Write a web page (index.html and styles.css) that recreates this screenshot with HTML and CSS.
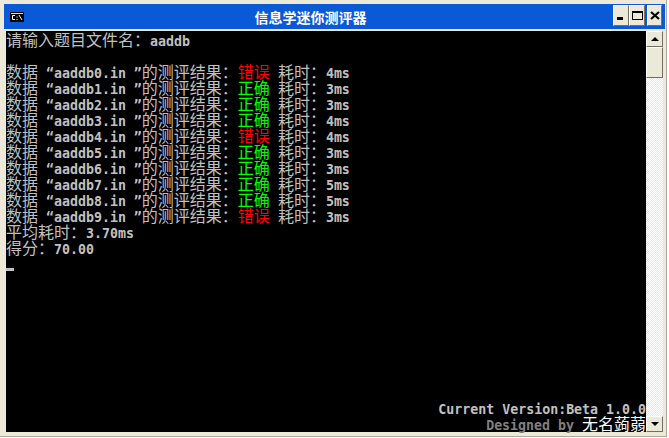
FILE: index.html
```html
<!DOCTYPE html>
<html lang="zh-CN">
<head>
<meta charset="utf-8">
<title>信息学迷你测评器</title>
<link rel="stylesheet" href="styles.css">
</head>
<body>
<div class="window">
  <header class="titlebar">
    <svg class="appicon" width="14" height="10" viewBox="0 0 14 10"><rect width="14" height="10" fill="#000"/><rect x="1" y="1" width="12" height="1" fill="#d8d8d8"/><path d="M5 3.5H2.5V7.5H5M7 4.5V5.5M7 7V8M9 3L12 8" fill="none" stroke="#fff"/></svg>
    <div class="title">信息学迷你测评器</div>
    <div class="btns">
      <div class="btn"><span class="min"></span></div>
      <div class="btn"><span class="max"></span></div>
      <div class="btn close"><svg width="10" height="9" viewBox="0 0 10 9"><path d="M1 1L9 8M9 1L1 8" stroke="#000" stroke-width="2.2" fill="none"/></svg></div>
    </div>
  </header>
  <div class="client">
    <main class="term">
      <div class="line"><span class="c">请输入题目文件名：</span><span class="l">aaddb</span></div>
      <div class="line"></div>
      <div class="line"><span class="c">数据</span><span class="l"> “aaddb0.in ”</span><span class="c">的测评结果：</span><span class="c err">错误</span><span class="l"> </span><span class="c">耗时：</span><span class="l">4ms</span></div>
      <div class="line"><span class="c">数据</span><span class="l"> “aaddb1.in ”</span><span class="c">的测评结果：</span><span class="c ok">正确</span><span class="l"> </span><span class="c">耗时：</span><span class="l">3ms</span></div>
      <div class="line"><span class="c">数据</span><span class="l"> “aaddb2.in ”</span><span class="c">的测评结果：</span><span class="c ok">正确</span><span class="l"> </span><span class="c">耗时：</span><span class="l">3ms</span></div>
      <div class="line"><span class="c">数据</span><span class="l"> “aaddb3.in ”</span><span class="c">的测评结果：</span><span class="c ok">正确</span><span class="l"> </span><span class="c">耗时：</span><span class="l">4ms</span></div>
      <div class="line"><span class="c">数据</span><span class="l"> “aaddb4.in ”</span><span class="c">的测评结果：</span><span class="c err">错误</span><span class="l"> </span><span class="c">耗时：</span><span class="l">4ms</span></div>
      <div class="line"><span class="c">数据</span><span class="l"> “aaddb5.in ”</span><span class="c">的测评结果：</span><span class="c ok">正确</span><span class="l"> </span><span class="c">耗时：</span><span class="l">3ms</span></div>
      <div class="line"><span class="c">数据</span><span class="l"> “aaddb6.in ”</span><span class="c">的测评结果：</span><span class="c ok">正确</span><span class="l"> </span><span class="c">耗时：</span><span class="l">3ms</span></div>
      <div class="line"><span class="c">数据</span><span class="l"> “aaddb7.in ”</span><span class="c">的测评结果：</span><span class="c ok">正确</span><span class="l"> </span><span class="c">耗时：</span><span class="l">5ms</span></div>
      <div class="line"><span class="c">数据</span><span class="l"> “aaddb8.in ”</span><span class="c">的测评结果：</span><span class="c ok">正确</span><span class="l"> </span><span class="c">耗时：</span><span class="l">5ms</span></div>
      <div class="line"><span class="c">数据</span><span class="l"> “aaddb9.in ”</span><span class="c">的测评结果：</span><span class="c err">错误</span><span class="l"> </span><span class="c">耗时：</span><span class="l">3ms</span></div>
      <div class="line"><span class="c">平均耗时：</span><span class="l">3.70ms</span></div>
      <div class="line"><span class="c">得分：</span><span class="l">70.00</span></div>
      <div class="line cursorline"><span class="cursor"></span></div>
      <footer class="foot">
        <div class="line right"><span class="l">Current Version:Beta 1.0.0</span></div>
        <div class="line right"><span class="l dim">Designed by </span><span class="c white">无名蒟蒻</span></div>
      </footer>
    </main>
    <aside class="scroll">
      <div class="arrow"><span class="up"></span></div>
      <div class="thumb"></div>
      <div class="track"></div>
      <div class="arrow"><span class="down"></span></div>
    </aside>
  </div>
</div>
</body>
</html>
```
FILE: styles.css
```css
html, body { margin: 0; padding: 0; background: #fff; }
body { width: 669px; height: 438px; overflow: hidden; }
.window {
  box-sizing: border-box; width: 667px; height: 437px;
  display: flex; flex-direction: column;
  background: #ece9d8; padding: 4px 1px 4px 4px;
  border-right: 1px solid #aca899; border-bottom: 1px solid #aca899;
}
.titlebar {
  height: 25px; margin-bottom: 2px; flex: none; display: flex; align-items: center;
  background: #0a5ad8; padding: 0 3px 0 6px; box-sizing: border-box;
}
.appicon { flex: none; }
.title {
  flex: 1; text-align: center; color: #fff;
  font: 700 14px/16px "Noto Sans CJK SC", sans-serif; padding-right: 16px;
}
.btns { display: flex; margin-bottom: 2px; }
.btn {
  width: 16px; height: 21px; box-sizing: border-box;
  background: #ece9d8; border: 1px solid; border-color: #fff #716f64 #716f64 #fff;
  display: flex; align-items: center; justify-content: center;
}
.close { margin-left: 2px; width: 15px; }
.min { width: 6px; height: 3px; background: #000; align-self: flex-end; margin: 0 2px 5px 0; }
.max { width: 11px; height: 9px; box-sizing: border-box; border: 1px solid #000; border-top-width: 2px; }
.client { flex: 1; min-height: 0; display: flex; padding: 0 2px; }
.term {
  flex: 1; min-width: 0; display: flex; flex-direction: column; background: #000; color: #c0c0c0;
  padding-bottom: 1px; opacity: .999;
}
.line { height: 16px; font: 400 16px/16px "Noto Sans CJK SC", sans-serif; white-space: pre; flex: none; }
.c { font: 400 16px/16px "Noto Sans CJK SC", sans-serif; }
.l { font: 700 13.28px/16px "DejaVu Sans Mono", monospace; white-space: pre; }
.err { color: #ff0000; }
.ok { color: #00ff00; }
.white { color: #fff; }
.dim { color: #808080; }
.cursorline { display: flex; align-items: flex-end; }
.cursor { width: 8px; height: 3px; background: #c0c0c0; }
.foot { margin-top: auto; }
.right { text-align: right; }
.scroll { width: 17px; flex: none; display: flex; flex-direction: column; background: repeating-conic-gradient(#fff 0 25%, #ece9d8 0 50%) 0 0 / 2px 2px; }
.arrow, .thumb {
  box-sizing: border-box; background: #ece9d8; border: 1px solid; border-color: #fff #716f64 #716f64 #fff; flex: none;
}
.arrow { height: 16px; display: flex; align-items: center; justify-content: center; }
.thumb { height: 31px; }
.track { flex: 1; }
.up { width: 0; height: 0; border: 4px solid transparent; border-top: 0; border-bottom-color: #000; }
.down { width: 0; height: 0; border: 4px solid transparent; border-bottom: 0; border-top-color: #000; }
```
